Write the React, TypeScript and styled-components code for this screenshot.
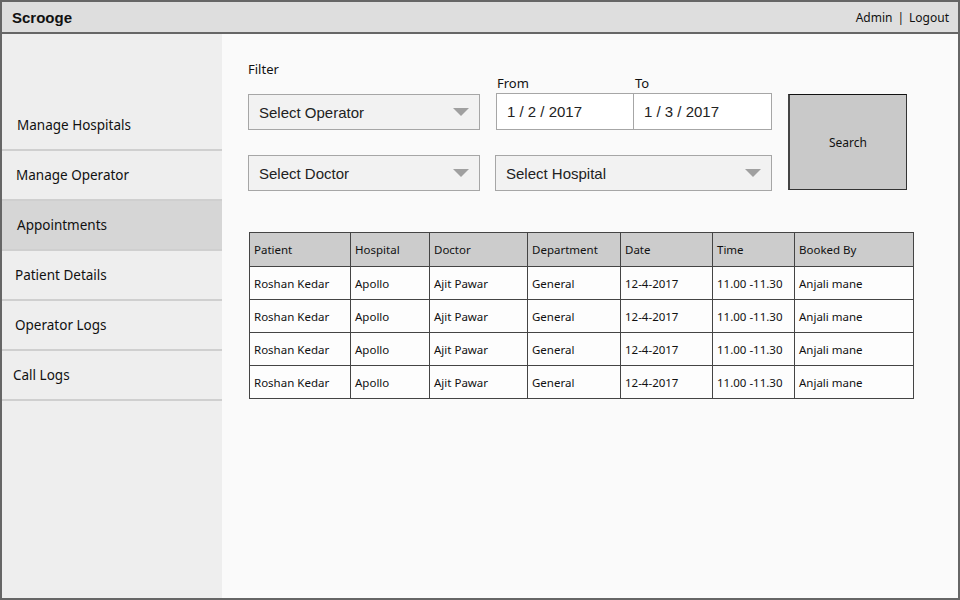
import React from "react";
import styled, { createGlobalStyle } from "styled-components";

const Global = createGlobalStyle`
  html, body { margin: 0; padding: 0; }
  body { background: #fafafa; }
  * { box-sizing: border-box; }
`;

const sketch = `"Noto Sans", "DejaVu Sans", sans-serif`;
const plain = `"Liberation Sans", Arial, sans-serif`;

const Frame = styled.div`
  width: 960px;
  height: 600px;
  border: 2px solid #666;
  display: flex;
  flex-direction: column;
  background: #fafafa;
  overflow: hidden;
`;

const Header = styled.header`
  height: 32px;
  flex: none;
  background: #dedede;
  border-bottom: 2px solid #666;
  display: flex;
  align-items: center;
  justify-content: space-between;
  padding: 0 9px 0 10px;
`;

const Brand = styled.div`
  font-family: ${plain};
  font-weight: bold;
  font-size: 15px;
  color: #111;
`;

const UserLinks = styled.div`
  font-family: ${sketch};
  font-size: 12px;
  color: #111;
  display: flex;
  gap: 5px;
`;

const Body = styled.div`
  flex: 1;
  display: flex;
  min-height: 0;
`;

const Sidebar = styled.nav`
  width: 220px;
  flex: none;
  background: #eeeeee;
  padding-top: 67px;
`;

const NavItem = styled.div<{ $active?: boolean; $indent: number }>`
  height: 50px;
  display: flex;
  align-items: center;
  padding-left: ${(p) => p.$indent}px;
  border-bottom: 2px solid #cfcfcf;
  background: ${(p) => (p.$active ? "#d6d6d6" : "transparent")};
  font-family: ${sketch};
  font-size: 13.5px;
  color: #111;
`;

const Main = styled.main`
  flex: 1;
  padding-left: 26px;
`;

const FilterGrid = styled.div`
  display: grid;
  grid-template-columns: 232px 277px 120px;
  grid-template-rows: 59px 37px 25px 36px;
  column-gap: 15px;
`;

const FilterLabel = styled.div`
  grid-column: 1;
  grid-row: 1;
  align-self: end;
  margin-bottom: 15px;
  font-family: ${sketch};
  font-size: 13px;
  color: #111;
`;

const DateLabels = styled.div`
  grid-column: 2;
  grid-row: 1;
  align-self: end;
  display: grid;
  grid-template-columns: 138px 1fr;
  padding-left: 2px;
  margin-bottom: 1px;
  font-family: ${sketch};
  font-size: 13px;
  color: #111;
`;

const Select = styled.div<{ $col: number; $row: number }>`
  grid-column: ${(p) => p.$col};
  grid-row: ${(p) => p.$row};
  margin-top: ${(p) => (p.$row === 2 ? 1 : 0)}px;
  height: 36px;
  background: #f2f2f2;
  border: 1px solid #a6a6a6;
  display: flex;
  align-items: center;
  justify-content: space-between;
  padding: 0 9px 0 10px;
  font-family: ${plain};
  font-size: 15px;
  color: #222;
`;

const DateBox = styled.div`
  grid-column: 2;
  grid-row: 2;
  height: 37px;
  margin-left: 1px;
  background: #fff;
  border: 1px solid #a6a6a6;
  display: grid;
  grid-template-columns: 137px 1fr;
  font-family: ${plain};
  font-size: 15px;
  color: #222;
`;

const DateCell = styled.div<{ $first?: boolean }>`
  display: flex;
  align-items: center;
  padding-left: 10px;
  border-right: ${(p) => (p.$first ? "1px solid #a6a6a6" : "none")};
`;

const SearchButton = styled.button`
  grid-column: 3;
  grid-row: 2 / span 3;
  margin-top: 1px;
  height: 96px;
  margin-left: 1px;
  background: #c9c9c9;
  border: 1px solid #333;
  border-left: 2px solid #444;
  border-top: 1px solid #111;
  font-family: ${sketch};
  font-size: 12px;
  color: #111;
  padding: 0;
`;

const Caret = () => (
  <svg width="18" height="10" viewBox="0 0 18 10">
    <polygon points="1,1 17,1 9,9" fill="#a0a0a0" />
  </svg>
);

const Table = styled.table`
  margin-top: 41px;
  margin-left: 1px;
  width: 664px;
  border-collapse: collapse;
  font-family: ${sketch};
  font-size: 11.5px;
  color: #111;
  table-layout: fixed;
`;

const Th = styled.th<{ $w: number }>`
  width: ${(p) => p.$w}px;
  height: 34px;
  background: #cccccc;
  border: 1.5px solid #444;
  text-align: left;
  font-weight: normal;
  padding: 0 4px;
  white-space: nowrap;
`;

const Td = styled.td`
  height: 33px;
  background: #fdfdfd;
  border: 1.5px solid #444;
  padding: 0 4px;
  white-space: nowrap;
`;

const navItems = [
  { label: "Manage Hospitals", indent: 15 },
  { label: "Manage Operator", indent: 14 },
  { label: "Appointments", indent: 15, active: true },
  { label: "Patient Details", indent: 13 },
  { label: "Operator Logs", indent: 13 },
  { label: "Call Logs", indent: 11 },
];

const columns = [
  { h: "Patient", w: 101 },
  { h: "Hospital", w: 79 },
  { h: "Doctor", w: 98 },
  { h: "Department", w: 93 },
  { h: "Date", w: 92 },
  { h: "Time", w: 82 },
  { h: "Booked By", w: 119 },
];

const row = ["Roshan Kedar", "Apollo", "Ajit Pawar", "General", "12-4-2017", "11.00 -11.30", "Anjali mane"];

export default function App() {
  return (
    <>
      <Global />
      <Frame>
        <Header>
          <Brand>Scrooge</Brand>
          <UserLinks>
            <span>Admin</span>
            <span>|</span>
            <span>Logout</span>
          </UserLinks>
        </Header>
        <Body>
          <Sidebar>
            {navItems.map((n) => (
              <NavItem key={n.label} $active={n.active} $indent={n.indent}>
                {n.label}
              </NavItem>
            ))}
          </Sidebar>
          <Main>
            <FilterGrid>
              <FilterLabel>Filter</FilterLabel>
              <DateLabels>
                <span>From</span>
                <span>To</span>
              </DateLabels>
              <Select $col={1} $row={2}>
                <span>Select Operator</span>
                <Caret />
              </Select>
              <DateBox>
                <DateCell $first>1 / 2 / 2017</DateCell>
                <DateCell>1 / 3 / 2017</DateCell>
              </DateBox>
              <SearchButton>Search</SearchButton>
              <Select $col={1} $row={4}>
                <span>Select Doctor</span>
                <Caret />
              </Select>
              <Select $col={2} $row={4}>
                <span>Select Hospital</span>
                <Caret />
              </Select>
            </FilterGrid>
            <Table>
              <thead>
                <tr>
                  {columns.map((c) => (
                    <Th key={c.h} $w={c.w}>
                      {c.h}
                    </Th>
                  ))}
                </tr>
              </thead>
              <tbody>
                {[0, 1, 2, 3].map((i) => (
                  <tr key={i}>
                    {row.map((v, j) => (
                      <Td key={j}>{v}</Td>
                    ))}
                  </tr>
                ))}
              </tbody>
            </Table>
          </Main>
        </Body>
      </Frame>
    </>
  );
}
